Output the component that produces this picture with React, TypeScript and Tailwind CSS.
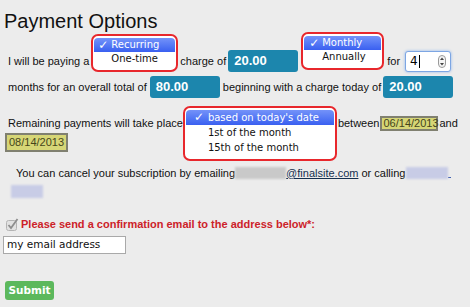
import React from "react";

type OpenSelectProps = {
  items: string[];
  wrap: string;
  menu: string;
  pad: string;
  tick: string;
  row: string;
};

// native-looking opened <select> menu, drawn over the row
function OpenSelect({ items, wrap, menu, pad, tick, row }: OpenSelectProps) {
  return (
    <div className={`relative h-[20px] shrink-0 ${wrap}`}>
      <div
        className={`absolute left-0 right-0 z-10 rounded-[7px] border-2 border-[#e8272c] bg-white px-[1px] py-[2px] font-['DejaVu_Sans',sans-serif] text-[10px] text-[#111] ${menu}`}
      >
        {items.map((item, idx) => (
          <div
            key={item}
            className={`relative whitespace-nowrap ${row} ${pad} ${
              idx === 0
                ? "rounded-t-[4px] bg-gradient-to-b from-[#7492f9] to-[#3a5ff0] text-white"
                : ""
            }`}
          >
            {idx === 0 && (
              <span className={`absolute top-0 text-[12px] font-bold ${tick}`}>✓</span>
            )}
            {item}
          </div>
        ))}
      </div>
    </div>
  );
}

function Amount({ value, className }: { value: string; className: string }) {
  return (
    <div
      className={`flex h-[22px] w-[70px] shrink-0 items-center rounded-[3px] bg-[#1c86ad] pl-[6px] text-[13px] font-bold text-white ${className}`}
    >
      {value}
    </div>
  );
}

function DateBox({ value, className }: { value: string; className: string }) {
  return (
    <div
      className={`flex shrink-0 items-center border-2 border-[#808070] bg-[#d6d676] text-[11px] text-[#45451a] ${className}`}
    >
      {value}
    </div>
  );
}

export default function App() {
  return (
    <div className="min-h-[307px] w-full overflow-hidden bg-[#ececec] font-['Liberation_Sans',Arial,sans-serif] text-[11px] text-[#111]">
      <h1 className="pl-[4px] pt-[10px] text-[20px] leading-[23px]">Payment Options</h1>

      <div className="mt-[16px] flex h-[24px] items-center pl-[8px]">
        <span className="whitespace-nowrap">I will be paying a</span>
        <OpenSelect
          items={["Recurring", "One-time"]}
          wrap="ml-[2px] w-[87px]"
          menu="top-[-17px] h-[38px]"
          pad="pl-[17px]"
          tick="left-[4px]"
          row="h-[14px] leading-[14px]"
        />
        <span className="ml-[2px] whitespace-nowrap">charge of</span>
        <Amount value="20.00" className="ml-[2px]" />
        <OpenSelect
          items={["Monthly", "Annually"]}
          wrap="ml-[3px] w-[83px]"
          menu="top-[-19px] h-[38px]"
          pad="pl-[18px]"
          tick="left-[5px]"
          row="h-[14px] leading-[14px]"
        />
        <span className="ml-[3px]">for</span>
        <div className="ml-[5px] flex h-[21px] w-[46px] shrink-0 items-center justify-between rounded-[3px] border border-[#7da6e3] bg-white pl-[4px] pr-[4px] shadow-[0_0_3px_#8db5ee]">
          <div className="flex items-center font-['DejaVu_Sans',sans-serif] text-[12px] text-black">
            4<span className="ml-[1px] h-[13px] w-[1px] bg-black" />
          </div>
          <svg width="8" height="13" viewBox="0 0 8 13">
            <rect x="0.5" y="0.5" width="7" height="12" rx="3.5" fill="#f4f4f4" stroke="#9a9a9a" />
            <path d="M2 5 L4 2.5 L6 5 Z M2 8 L4 10.5 L6 8 Z" fill="#444" />
          </svg>
        </div>
      </div>

      <div className="mt-[2px] flex h-[24px] items-center pl-[8px]">
        <span className="whitespace-nowrap">months for an overall total of</span>
        <Amount value="80.00" className="ml-[3px]" />
        <span className="ml-[3px] whitespace-nowrap">beginning with a charge today of</span>
        <Amount value="20.00" className="ml-[2px]" />
      </div>

      <div className="mt-[14px] flex h-[20px] items-center pl-[8px]">
        <span className="whitespace-nowrap">Remaining payments will take place</span>
        <OpenSelect
          items={["based on today's date", "1st of the month", "15th of the month"]}
          wrap="ml-[0px] w-[154px]"
          menu="top-[-7px] h-[55px]"
          pad="pl-[22px]"
          tick="left-[8px]"
          row="h-[15px] leading-[15px]"
        />
        <span className="ml-[1px]">between</span>
        <DateBox value="06/14/2013" className="ml-[1px] h-[15px] w-[58px] pl-[1px]" />
        <span className="ml-[1px]">and</span>
      </div>
      <div className="flex">
        <DateBox value="08/14/2013" className="ml-[5px] h-[19px] w-[63px] pl-[2px]" />
      </div>

      <div className="mt-[13px] flex h-[16px] items-center pl-[16px]">
        <span className="whitespace-nowrap">You can cancel your subscription by emailing</span>
        <span className="h-[12px] w-[51px] shrink-0 bg-[#c9c9c9] blur-[1px]" />
        <span className="whitespace-nowrap text-[#15304f] underline">@finalsite.com</span>
        <span className="ml-[3px] whitespace-nowrap">or calling</span>
        <span className="ml-[1px] flex items-end">
          <span className="h-[12px] w-[42px] bg-[#c8cce6] blur-[1px]" />
          <span className="mb-[1px] h-[1px] w-[3px] bg-[#4060b0]" />
        </span>
      </div>
      <div className="ml-[11px] mt-[4px] h-[13px] w-[32px] bg-[#c8cce6] blur-[1px]" />

      <div className="mt-[18px] flex h-[16px] items-center">
        <svg className="ml-[6px] shrink-0" width="13" height="13" viewBox="0 0 13 13">
          <rect x="0.5" y="2.5" width="10" height="10" rx="2" fill="#e2e2e2" stroke="#b4b4b4" />
          <path d="M2.5 7 L5 10 L11.5 1" fill="none" stroke="#8e8e8e" strokeWidth="1.8" />
        </svg>
        <span className="ml-[2px] whitespace-nowrap text-[11px] font-bold text-[#cc2229]">
          Please send a confirmation email to the address below*:
        </span>
      </div>

      <div className="ml-[3px] mt-[4px] flex h-[18px] w-[123px] items-center border border-[#a9a9a9] bg-white pl-[3px] font-['DejaVu_Sans',sans-serif] text-[10.5px] text-[#111]">
        my email address
      </div>

      <button className="ml-[5px] mt-[27px] flex h-[19px] w-[49px] items-center justify-center rounded-[3px] bg-[#5cb85c] font-['DejaVu_Sans',sans-serif] text-[10.5px] font-bold text-white">
        Submit
      </button>
    </div>
  );
}
